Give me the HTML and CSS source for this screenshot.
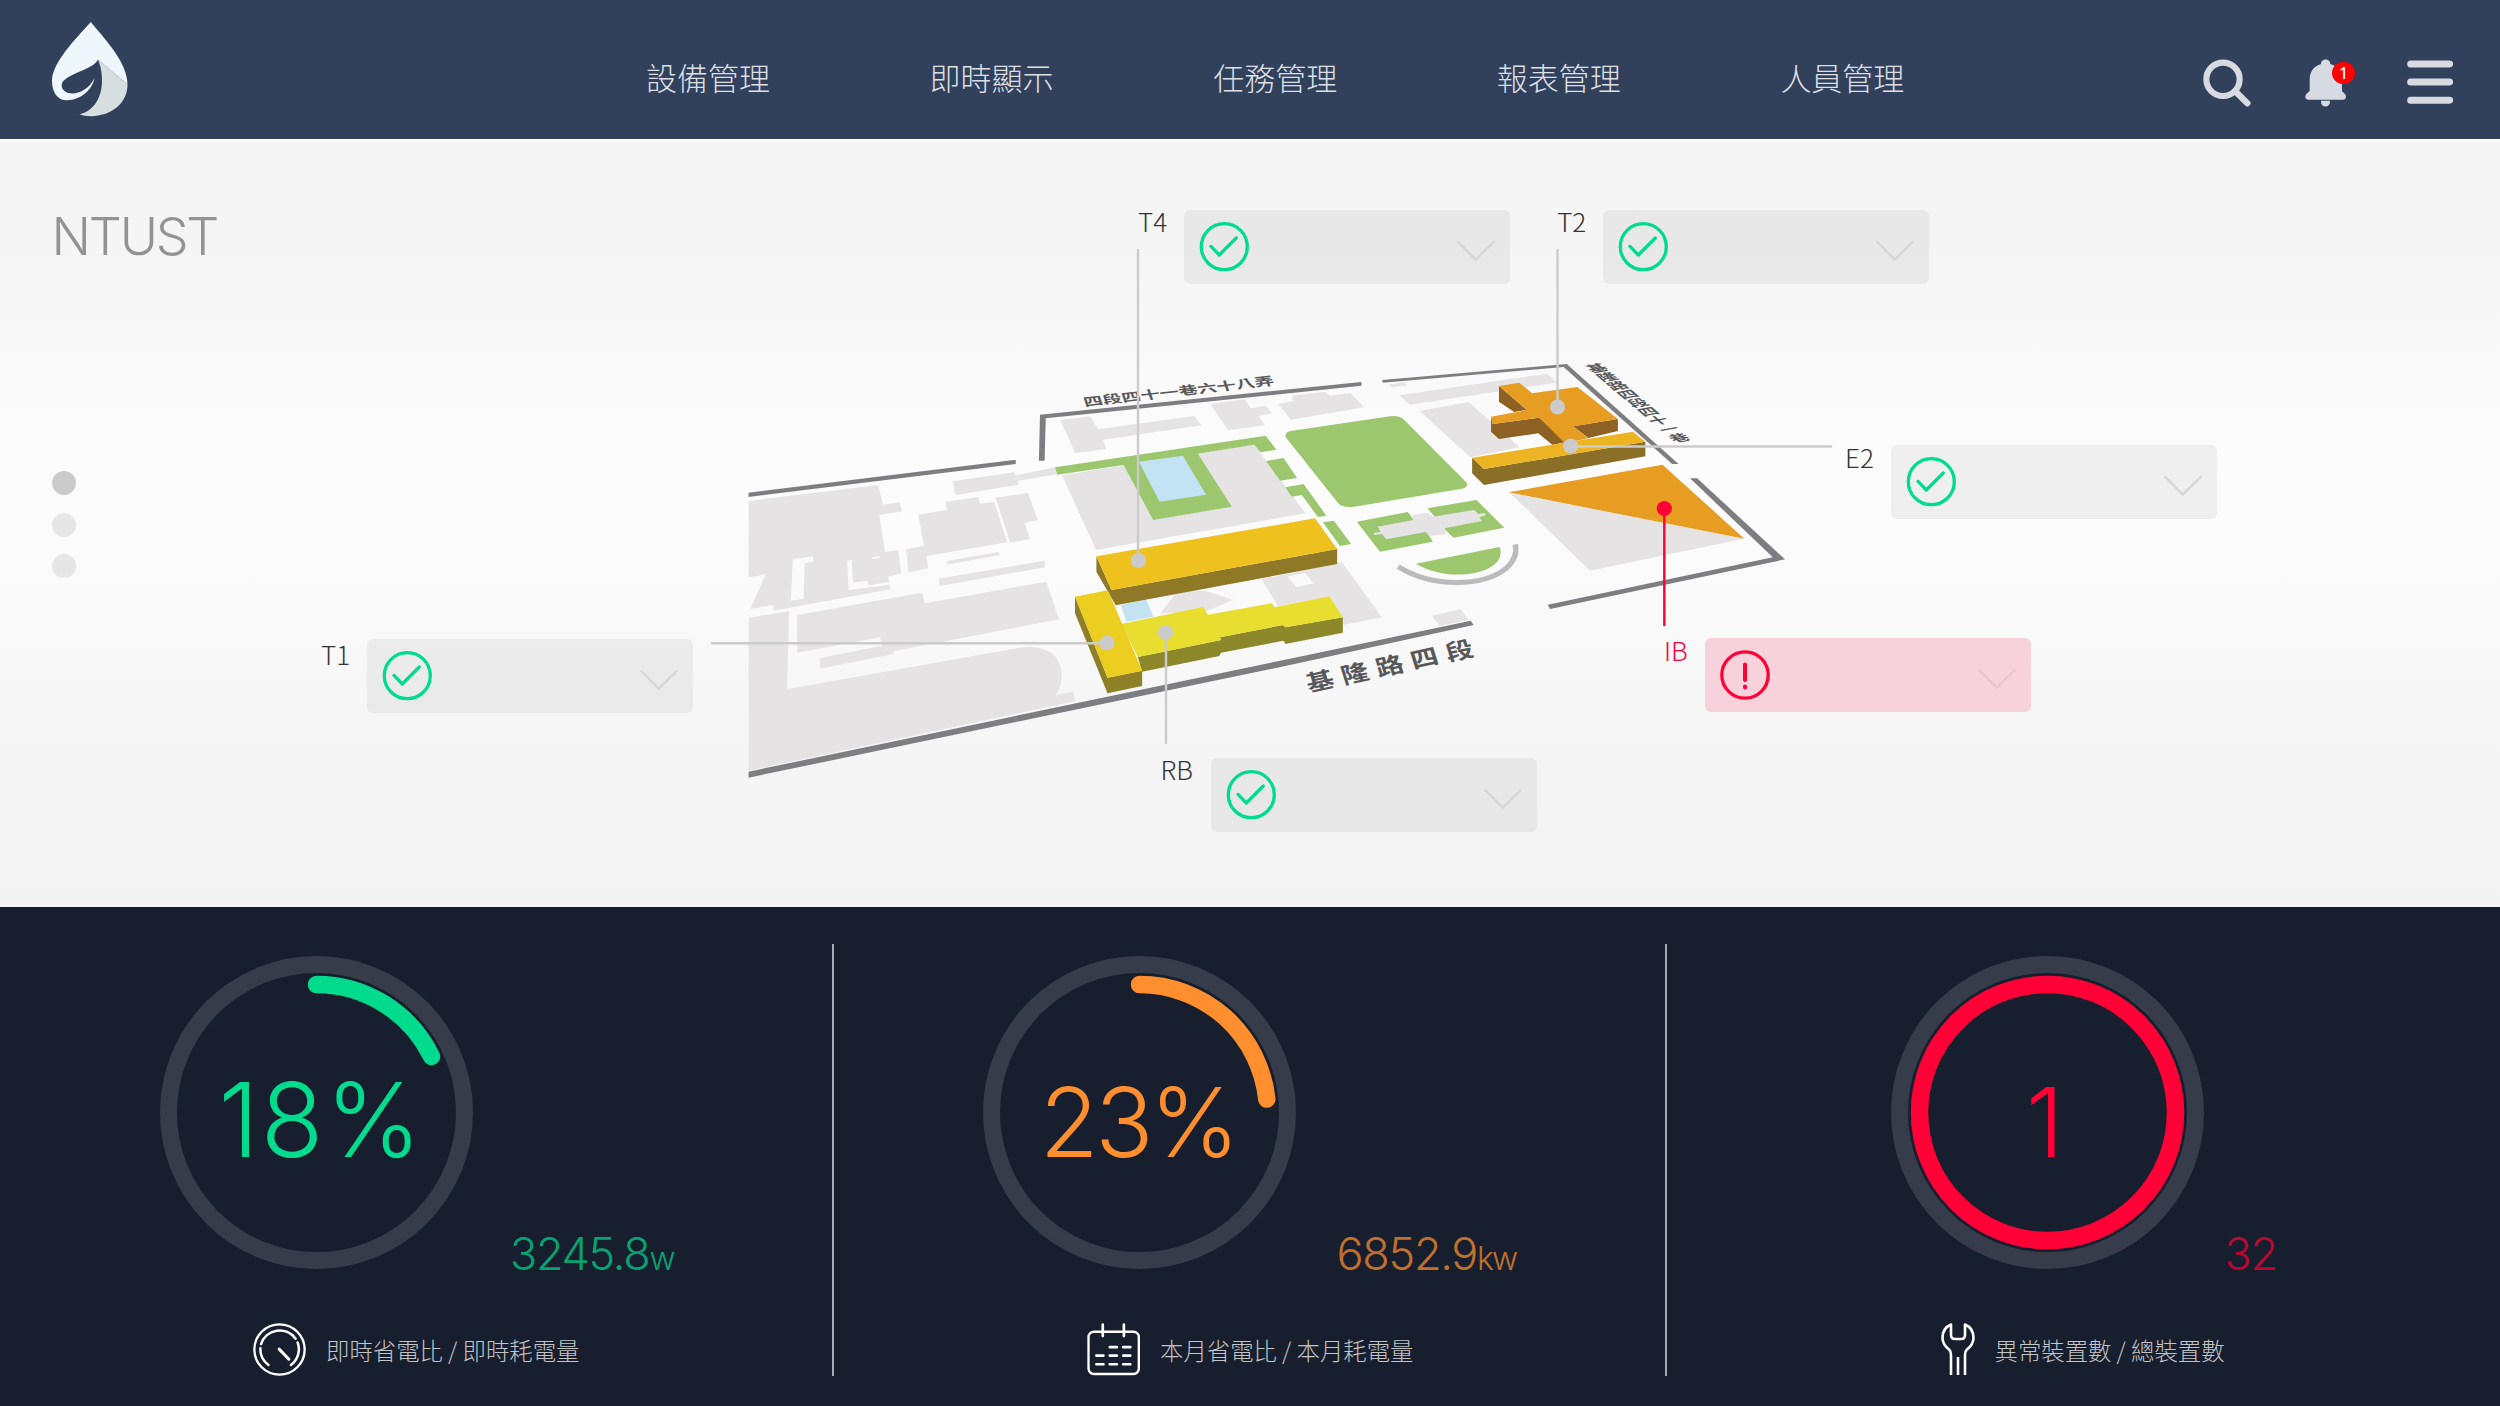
FILE: index.html
```
<!DOCTYPE html>
<html lang="zh-Hant">
<head>
<meta charset="utf-8">
<title>NTUST</title>
<link rel="stylesheet" href="styles.css">
</head>
<body>
<header class="topbar">
  <svg class="logo" viewBox="101 68 149 284" preserveAspectRatio="none">
    <path fill="#eef7fb" d="M177 68C206 122 249 190 249 256L191 181C185 211 120 226 120 258C120 292 165 296 184 237C182 265 160 303 130 303C110 303 101 275 101 245C101 190 148 118 177 68Z"/>
    <path fill="#d6dedf" d="M191 181L249 256C249 315 215 351 178 351C168 351 161 349 155 345C185 335 199 290 199 245C199 218 196 198 191 181Z"/>
  </svg>
  <nav class="nav">
    <a>設備管理</a><a>即時顯示</a><a>任務管理</a><a>報表管理</a><a>人員管理</a>
  </nav>
  <div class="tools">
    <svg class="search" viewBox="310 176 144 144"><circle cx="370" cy="237" r="50" fill="none" stroke="#d7dae0" stroke-width="18.5"/><path d="M406 272L443 309" stroke="#d7dae0" stroke-width="19" stroke-linecap="round"/></svg>
    <div class="bell">
      <svg viewBox="618 178 124 144"><path fill="#d7dae0" d="M632 274V240C632 215 645 200 666 193C666 175 694 175 694 193C716 200 729 215 729 240V274L738 283C744 291 740 300 732 300H628C619 300 616 291 622 283ZM666 303H693V307A13.5 13.5 0 0 1 666 307Z"/></svg>
      <span class="badge">1</span>
    </div>
    <svg class="menu" viewBox="920 182 138 132"><path d="M931 194H1048M931 248H1048M931 302.500H1048" stroke="#d7dae0" stroke-width="21" stroke-linecap="round"/></svg>
  </div>
</header>

<main class="stage">
  <h1 class="site">NTUST</h1>
  <div class="pager"><i class="on"></i><i></i><i></i></div>

  <svg class="map" viewBox="0 139 2500 768">
    <!-- western campus -->
    <g transform="matrix(.35714 0 0 .33333 730 350)">
      <g fill="#e5e3e4">
        <path d="M52 453L415 405 428 464 475 457 482 484 418 495 434 606 470 600 480 670 443 680 449 718 122 782 120 765 57 777 100 673 52 682Z"/>
        <path d="M52 803L165 784 160 1018 810 893C865 885 900 900 918 930C935 965 930 1010 912 1035L960 1025 967 1053 52 1262Z"/>
        <path d="M188 795L537 728 545 760 886 695 921 808 460 903 458 912 253 956 251 924 425 888 421 862 188 908Z"/>
        <path d="M527 494L607 480 604 456 695 441 700 461 740 456 776 577 550 618 555 655 500 667 493 598 543 588Z"/>
        <path d="M743 443L834 429 862 510 825 518 840 568 785 578Z"/>
        <path d="M608 633L752 606 755 616 611 643ZM585 686L880 632 882 652 587 708Z"/>
        <path d="M623 394L796 367 799 376 910 352 914 373 806 392 807 404 632 435Z"/>
        <path d="M925 211L1008 199 1030 238 1300 198 1320 226 1044 269 1054 297 967 309Z"/>
        <path d="M1345 162L1440 148 1458 175 1500 167 1518 190 1480 198 1498 226 1395 241Z"/>
        <path d="M930 376L1468 284 1611 490 1025 600Z"/>
        <path d="M1205 790L1245 735Q1300 715 1340 725L1408 750 1330 785Z"/>
        <path d="M1488 688L1713 636 1825 802 1715 825 1678 740 1535 768Z"/>
      </g>
      <g fill="#fafafa">
        <path d="M176 628L232 619 233 636 209 640 206 746 170 753ZM328 632L341 630 344 698 385 692 388 706 447 695 447 704 332 720ZM398 622L420 618 418 625 398 627Z"/>
        <path d="M1561 680L1610 668 1634 700 1586 712Z"/>
      </g>
      <path fill="#9cc76e" d="M910 352L1500 257 1530 299 1485 307 1468 284 1310 311 1405 470 1185 510 1102 345 916 374Z"/>
      <path fill="#c3e3f4" d="M1145 335L1268 317 1333 434 1203 455ZM1095 765L1165 748 1185 800 1110 815Z"/>
      <path fill="#7e7d81" d="M52 428L800 329V342L52 441ZM865 332L868 194 1768 96V107L884 205 881 332ZM52 1265L1568 926 2074 812 2082 825 1568 945 52 1283Z"/>
      <!-- T4 -->
      <path fill="#8f7826" d="M1026 619L1068 720 1700 597V642L1080 766 1026 665Z"/>
      <path fill="#eec11f" d="M1026 619L1638 505 1700 597 1068 720Z"/>
      <!-- RB -->
      <path fill="#8c882a" d="M1142 921L1375 870 1372 862 1548 825 1555 832 1716 802V848L1555 882 1550 872 1375 908 1370 918 1154 965Z"/>
      <path fill="#e8de30" d="M1095 822L1325 771 1338 794 1517 760 1525 772 1678 739 1716 802 1555 832 1548 825 1372 862 1375 870 1142 921Z"/>
      <!-- T1 -->
      <path fill="#8f7f26" d="M966 740L1057 983 1154 962V1008L1057 1030 966 790Z"/>
      <path fill="#ebce20" d="M966 740L1058 721 1154 962 1057 983Z"/>
    </g>
    <!-- eastern campus -->
    <g transform="matrix(.35714 0 0 .33333 1240 350)">
      <g fill="#e5e3e4">
        <path d="M107 162L148 153 145 137 240 125 250 137 310 130 347 172 143 209Z"/>
        <path d="M415 104L460 97 468 106 425 112ZM447 136L860 71 887 98 475 164ZM503 183L640 156 783 292 645 322Z"/>
        <path d="M755 428L1410 566 980 662ZM537 797L618 778 640 810 560 827Z"/>
      </g>
      <g fill="#9cc76e">
        <path d="M73 333L122 324 160 384 112 392ZM127 412L178 402 242 497 218 501 173 435 145 440ZM232 517L263 512 311 582 280 588Z"/>
        <path d="M128 262C126 250 132 245 142 243L420 199Q448 195 462 212L635 398Q640 412 622 416L320 470Q288 475 275 460Z"/>
        <path d="M327 515L470 486 490 515 520 540 540 575 392 605ZM525 475L662 450 740 533 598 563 570 535 545 500Z"/>
        <path d="M492 641L727 591C738 625 715 655 660 668C600 682 540 670 492 641Z"/>
      </g>
      <path fill="#e5e3e4" d="M385 530L485 510 483 495 525 488 540 500 655 480 668 492 685 489 688 496 670 502 678 513 573 535 578 552 530 558 520 546 410 568 397 552 375 555 375 549 394 545Z"/>
      <path fill="none" stroke="#bbbbbd" stroke-width="15" d="M443 650C540 715 680 710 745 655C770 632 775 605 771 583"/>
      <path fill="#e69d22" d="M752 427L1183 344 1412 566Z"/>
      <path fill="#7e7d81" d="M398 90L915 42 1228 342H1210L906 51 400 98ZM1260 385H1280L1526 628 868 777 862 764 1492 622Z"/>
      <!-- T2 -->
      <path fill="#8c6123" d="M725 108L803 180 768 186 725 155ZM703 200L708 222 838 203 915 275 875 285 835 250 725 267 703 245ZM933 229L1058 207V243L975 264Z"/>
      <path fill="#e69d22" d="M725 108L782 98 818 130 945 111 1058 207 933 229 975 265 910 280 838 203 708 222 703 200 803 180Z"/>
      <!-- E2 -->
      <path fill="#8c6f26" d="M650 323L683 357 1135 275V319L683 405 650 370Z"/>
      <path fill="#ecb422" d="M650 323L1100 245 1135 275 683 357Z"/>
    </g>
    <g class="street">
      <text transform="matrix(1 -.115 .2 .6 1085 406.500)" font-size="19">四段四十一巷六十八弄</text>
      <text transform="matrix(1 -.22 .25 .8 1309 692)" font-size="27" letter-spacing="7.800">基隆路四段</text>
      <text transform="matrix(1.35 -.25 .79 .67 1592 373)" font-size="13"><tspan x="0">基</tspan><tspan x="0" dy="13">隆</tspan><tspan x="0" dy="13">路</tspan><tspan x="0" dy="13">四</tspan><tspan x="0" dy="13">段</tspan><tspan x="0" dy="13">四</tspan><tspan x="0" dy="13">十</tspan><tspan x="0" dy="13">一</tspan><tspan x="0" dy="13">巷</tspan></text>
    </g>
    <g stroke="#cbcbcb" stroke-width="2.400" fill="none" stroke-linecap="round">
      <path d="M1138 250V560M1557.500 250V407M1570 446.500H1831M712 643.300H1107M1166 632V743"/>
      <path stroke="#ff0037" d="M1664.300 508V625"/>
    </g>
    <g fill="#cbcbcb">
      <circle cx="1138.500" cy="560.700" r="7.600"/><circle cx="1557.500" cy="407" r="7.600"/><circle cx="1570.700" cy="446" r="7.600"/><circle cx="1107" cy="643" r="7.600"/><circle cx="1165.500" cy="632.300" r="7.600"/><circle cx="1664.300" cy="508.500" r="7.600" fill="#ff0037"/>
    </g>
  </svg>

  <svg class="defs">
    <symbol id="ok" viewBox="0 0 326 74"><g fill="none" stroke-linecap="round" stroke-linejoin="round"><circle cx="40.300" cy="36.700" r="23" stroke="#00db8e" stroke-width="3.300"/><path d="M27 36.400L35.300 45 52.300 28" stroke="#00db8e" stroke-width="3.300"/><path d="M274.300 32L291.700 49.700 309.700 32" stroke="#d6d6d6" stroke-width="2.400"/></g></symbol>
    <symbol id="alert" viewBox="0 0 326 74"><g fill="none" stroke-linecap="round" stroke-linejoin="round"><circle cx="40" cy="37" r="23.200" stroke="#ff0037" stroke-width="3.300"/><path d="M40 26.500V42M40 48.500V49.500" stroke="#ff0037" stroke-width="4"/><path d="M274.300 32L291.700 49.700 309.700 32" stroke="#e8c5cc" stroke-width="2.400"/></g></symbol>
  </svg>
  <div class="pin t4"><span>T4</span><svg class="card"><use href="#ok"/></svg></div>
  <div class="pin t2"><span>T2</span><svg class="card"><use href="#ok"/></svg></div>
  <div class="pin e2"><span>E2</span><svg class="card"><use href="#ok"/></svg></div>
  <div class="pin t1"><span>T1</span><svg class="card"><use href="#ok"/></svg></div>
  <div class="pin rb"><span>RB</span><svg class="card"><use href="#ok"/></svg></div>
  <div class="pin ib"><span>IB</span><svg class="card"><use href="#alert"/></svg></div>
</main>

<footer class="metrics">
  <section class="metric live">
    <div class="row">
      <div class="ring">
        <svg viewBox="-156.500 -156.500 313 313"><circle r="148" class="track"/><path class="arc" d="M0 -128A128 128 0 0 1 115 -56"/></svg>
        <strong>18%</strong>
      </div>
      <p class="value">3245.8<small>w</small></p>
    </div>
    <div class="caption">
      <svg width="53" height="53" viewBox="40 38 158 158"><g fill="none" stroke="#fff" stroke-linecap="round"><circle cx="119" cy="117" r="75" stroke-width="7"/><path stroke-width="7.500" d="M86 163A58 58 0 0 1 62 113M64 101A58 58 0 0 1 167 85M173 96A58 58 0 0 1 153 163"/><path stroke-width="9" d="M118 116L147 146"/></g></svg>
      <span>即時省電比 / 即時耗電量</span>
    </div>
  </section>
  <section class="metric month">
    <div class="row">
      <div class="ring">
        <svg viewBox="-156.500 -156.500 313 313"><circle r="148" class="track"/><path class="arc" d="M0 -128A128 128 0 0 1 127.300 -13.400"/></svg>
        <strong>23%</strong>
      </div>
      <p class="value">6852.9<small>kw</small></p>
    </div>
    <div class="caption">
      <svg width="53" height="53" viewBox="51 38 158 158"><g fill="none" stroke="#fff" stroke-linecap="round"><rect x="55.500" y="64" width="150" height="126" rx="16" stroke-width="7"/><path stroke-width="8" d="M98 43V77M161 43V77M119 110H140M159 110H180M79 135H100M119 135H140M159 135H180M79 161H100M119 161H140M159 161H180"/></g></svg>
      <span>本月省電比 / 本月耗電量</span>
    </div>
  </section>
  <section class="metric faults">
    <div class="row">
      <div class="ring">
        <svg viewBox="-156.500 -156.500 313 313"><circle r="148" class="track"/><circle r="128" class="arc"/></svg>
        <strong>1</strong>
      </div>
      <p class="value">32</p>
    </div>
    <div class="caption">
      <svg width="34" height="53" viewBox="0 0 34 53"><path fill="none" stroke="#fff" stroke-width="2.600" stroke-linejoin="round" d="M10 52V32Q10 28.500 8.500 27C6 25 1.500 21 1.500 15C1.500 9 4 4 10 1.500V12Q10 16 14 16H20Q24 16 24 12V1.500C30 4 32.500 9 32.500 15C32.500 21 28 25 25.500 27Q24 28.500 24 32V52M17 34V52"/></svg>
      <span>異常裝置數 / 總裝置數</span>
    </div>
  </section>
</footer>
</body>
</html>
```
FILE: styles.css
```
* { box-sizing: border-box; margin: 0; padding: 0; }
body {
  width: 2500px;
  height: 1406px;
  overflow: hidden;
  font-family: "Noto Sans CJK TC", sans-serif;
  font-weight: 300;
  background: #171e2d;
}
svg { display: block; flex: none; }

/* header */
.topbar {
  height: 139px;
  padding: 0 47.500px 0 52px;
  display: flex;
  align-items: flex-start;
  background: #31415b;
}
.logo { width: 76px; height: 94.500px; margin-top: 22px; }
.nav { display: flex; gap: 159.600px; margin: 56.700px 0 0 518px; }
.nav a { font-size: 31px; line-height: 40px; color: #dcdfe4; white-space: nowrap; }
.tools { display: flex; margin: 58.700px 0 0 auto; }
.search { width: 48px; height: 48px; margin-right: 54.700px; }
.bell { position: relative; margin-right: 60px; }
.bell svg { width: 41.300px; height: 48px; margin-top: .7px; }
.badge {
  position: absolute;
  left: 27px;
  top: 3px;
  width: 22.500px;
  height: 22.500px;
  border-radius: 50%;
  background: #fe0000;
  color: #fff;
  font: 500 16px/22px "Noto Sans", sans-serif;
  text-align: center;
}
.menu { width: 46px; height: 44px; margin-top: 1.700px; }

/* campus map */
.stage {
  position: relative;
  height: 768px;
  padding: 69.500px 50px 0 51.500px;
  border-top: 2px solid #fff;
  background: linear-gradient(#f5f5f5, #f5f5f5 14%, #fcfcfc 42%, #fbfbfb 54%, #f5f5f5 80%, #f3f3f3);
}
.site {
  font: 300 52px/52px Inter, "Liberation Sans", sans-serif;
  letter-spacing: -2.200px;
  color: #939393;
}
.pager { display: flex; flex-direction: column; gap: 17.700px; margin: 208.500px 0 0 .7px; }
.pager i { width: 24px; height: 24px; border-radius: 50%; background: #e6e6e6; }
.pager .on { background: #cbcbcb; }
.map { position: absolute; left: 0; top: -2px; width: 2500px; height: 768px; }
.street { font-weight: 700; fill: #58585a; }
.defs { position: absolute; width: 0; height: 0; }
.pin { position: absolute; display: flex; align-items: flex-start; }
.pin span { width: 46px; margin-top: -1.500px; font-size: 26px; line-height: 26px; font-weight: 200; color: #333; }
.card { width: 326px; height: 74px; border-radius: 6px; background: rgba(0, 0, 0, .052); }
.t4 { left: 1138px; top: 68.500px; }
.t2 { left: 1557.200px; top: 68.500px; }
.e2 { left: 1845px; top: 304px; }
.t1 { left: 321px; top: 498px; }
.t1 span { margin-top: 1.500px; }
.rb { left: 1160.500px; top: 616.700px; }
.rb span { width: 50.500px; }
.ib { left: 1664px; top: 497.300px; }
.ib span { width: 41px; color: #ff0037; }
.ib .card { background: #f7d2da; }

/* metrics */
.metrics {
  height: 499px;
  padding-top: 37px;
  display: grid;
  grid-template-columns: 833.500px 833.500px 1fr;
  background: #171e2d;
}
.metric { height: 432px; padding-top: 12px; border-right: 2px solid #a9abb0; }
.live { --tone: #00db8e; --dim: #07a271; padding-left: 160px; }
.month { --tone: #ff8f2e; --dim: #c0702e; padding-left: 149.500px; }
.faults { --tone: #ff0037; --dim: #b90834; padding-left: 223.500px; border: 0; }
.row { display: flex; align-items: flex-end; }
.ring { display: grid; width: 313px; height: 313px; place-items: center; }
.ring > * { grid-area: 1 / 1; }
.ring svg { width: 313px; height: 313px; overflow: visible; }
.ring circle, .ring path { fill: none; stroke-width: 17.500px; stroke-linecap: round; }
.ring .track { stroke: #363c4a; stroke-width: 17px; }
.ring .arc { stroke: var(--tone); }
.ring strong {
  font: 300 96px/1 Inter, "Liberation Sans", sans-serif;
  letter-spacing: -3.500px;
  padding: 19px 3px 0 0;
  color: var(--tone);
}
.live strong { font-size: 102.500px; letter-spacing: 2px; padding: 15px 0 0 9px; }
.faults strong { padding-right: 4px; letter-spacing: 0; }
.value {
  font: 300 45px/1 Inter, "Liberation Sans", sans-serif;
  margin: 0 0 -7px 37px;
  letter-spacing: -1.300px;
  color: var(--dim);
  white-space: nowrap;
}
.value small { font-size: 32px; letter-spacing: -2px; }
.month .value { margin-left: 40.500px; }
.faults .value { margin-left: 21px; }
.caption { display: flex; align-items: center; gap: 20px; margin: 53.500px 0 0 93px; }
.caption span { font-size: 23.400px; line-height: 30px; padding-top: 2px; color: #c3c4c6; white-space: nowrap; }
.month .caption { margin-left: 104px; }
.faults .caption { margin-left: 50px; }
```
